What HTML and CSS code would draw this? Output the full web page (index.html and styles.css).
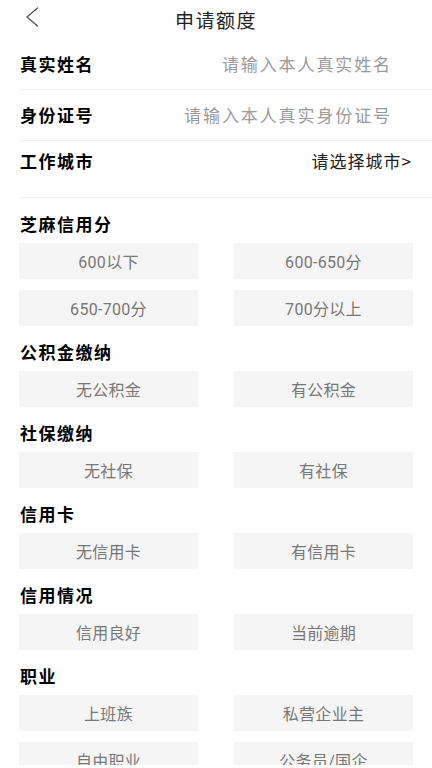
FILE: index.html
```html
<!DOCTYPE html>
<html lang="zh-CN">
<head>
<meta charset="utf-8">
<title>申请额度</title>
<link rel="stylesheet" href="styles.css">
</head>
<body>
<div class="page">
  <header class="nav">
    <span class="nav-back">
      <svg width="14" height="22" viewBox="0 0 14 22"><path d="M12.5 2 L2 11 L12.5 20" fill="none" stroke="#555" stroke-width="1.4" stroke-linecap="round" stroke-linejoin="round"/></svg>
    </span>
    <h1 class="nav-title">申请额度</h1>
    <span></span>
  </header>

  <div class="form">
    <div class="row">
      <span class="row-label">真实姓名</span>
      <span class="row-value placeholder">请输入本人真实姓名</span>
    </div>
    <div class="row">
      <span class="row-label">身份证号</span>
      <span class="row-value placeholder">请输入本人真实身份证号</span>
    </div>
    <div class="row row-city">
      <span class="row-label">工作城市</span>
      <span class="row-value city">请选择城市&gt;</span>
    </div>
  </div>

  <section class="group">
    <h2 class="group-title">芝麻信用分</h2>
    <div class="options">
      <div class="option">600以下</div>
      <div class="option">600-650分</div>
      <div class="option">650-700分</div>
      <div class="option">700分以上</div>
    </div>
  </section>

  <section class="group">
    <h2 class="group-title">公积金缴纳</h2>
    <div class="options">
      <div class="option">无公积金</div>
      <div class="option">有公积金</div>
    </div>
  </section>

  <section class="group">
    <h2 class="group-title">社保缴纳</h2>
    <div class="options">
      <div class="option">无社保</div>
      <div class="option">有社保</div>
    </div>
  </section>

  <section class="group">
    <h2 class="group-title">信用卡</h2>
    <div class="options">
      <div class="option">无信用卡</div>
      <div class="option">有信用卡</div>
    </div>
  </section>

  <section class="group">
    <h2 class="group-title">信用情况</h2>
    <div class="options">
      <div class="option">信用良好</div>
      <div class="option">当前逾期</div>
    </div>
  </section>

  <section class="group">
    <h2 class="group-title">职业</h2>
    <div class="options">
      <div class="option">上班族</div>
      <div class="option">私营企业主</div>
      <div class="option">自由职业</div>
      <div class="option">公务员/国企</div>
    </div>
  </section>
</div>
</body>
</html>
```

FILE: styles.css
```css
* { box-sizing: border-box; }
html, body {
  margin: 0;
  padding: 0;
  background: #fff;
}
body {
  font-family: Roboto, "Noto Sans CJK SC", sans-serif;
  color: #111;
}
.page {
  width: 432px;
  height: 765px;
  overflow: hidden;
  background: #fff;
}
.nav {
  height: 39px;
  display: grid;
  grid-template-columns: 1fr auto 1fr;
  align-items: center;
}
.nav-back {
  align-self: start;
  display: flex;
  padding-left: 25px;
  padding-top: 6px;
}
.nav-title {
  margin: 0;
  font-size: 19px;
  font-weight: 400;
  letter-spacing: 1.5px;
  color: #222;
  line-height: 24px;
  font-family: "Noto Sans CJK SC", sans-serif;
}
.form {
  padding-left: 20px;
}
.row {
  height: 51px;
  border-bottom: 1px solid #eeeeee;
  display: flex;
  align-items: center;
  justify-content: space-between;
  padding-right: 40px;
}
.row-city {
  height: 57px;
  align-items: flex-start;
  padding-top: 8px;
  padding-right: 20px;
}
.row-label {
  font-family: "Noto Sans CJK SC", sans-serif;
  font-size: 17px;
  font-weight: 700;
  letter-spacing: 1.5px;
  line-height: 24px;
  color: #000;
}
.row-value {
  font-family: "Noto Sans CJK SC", sans-serif;
  font-size: 17px;
  letter-spacing: 1.9px;
  line-height: 24px;
}
.placeholder { color: #9a9a9a; }
.city { color: #222; letter-spacing: 1px; }
.group-title {
  margin: 0;
  padding: 14px 20px 7px;
  font-family: "Noto Sans CJK SC", sans-serif;
  font-size: 17px;
  font-weight: 700;
  letter-spacing: 1.5px;
  line-height: 24px;
  color: #000;
}
.options {
  display: grid;
  grid-template-columns: 179px 179px;
  column-gap: 36px;
  row-gap: 11px;
  padding: 0 19px;
}
.option {
  height: 36px;
  background: #f5f5f5;
  display: flex;
  align-items: center;
  justify-content: center;
  font-size: 16px;
  color: #777;
  letter-spacing: 0.3px;
}
```
